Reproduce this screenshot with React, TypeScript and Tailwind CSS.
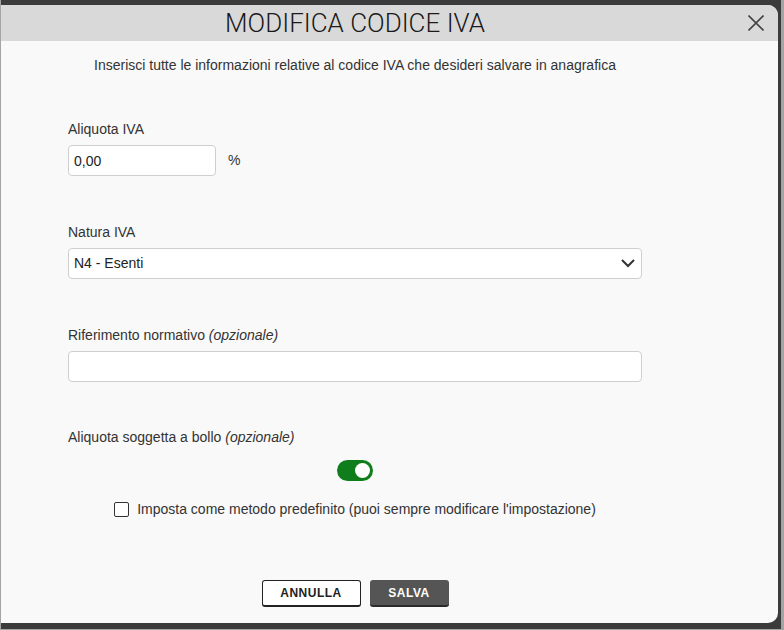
import { useState } from 'react';

const sans = { fontFamily: '"Liberation Sans", Arial, sans-serif' };

export default function App() {
  const [bollo, setBollo] = useState(true);
  const [predefinito, setPredefinito] = useState(false);

  return (
    <div className="w-[784px] h-[630px] bg-[#a4a4a4] flex overflow-hidden" style={sans}>
      <div className="ml-px w-[780px] h-[629px] bg-[#3b3b3b] pt-[5px]">
        <div className="w-[777px] h-[618px] bg-[#f9f9f9] rounded-tr-[10px] rounded-br-[10px] overflow-hidden flex flex-col">
          {/* header */}
          <div className="relative h-[36px] shrink-0 bg-[#d9d9d9] flex items-center">
            <h1
              className="ml-[67px] w-[574px] text-center text-[26px] font-light text-[#1a1a1a] leading-none"
              style={{ fontFamily: 'Roboto, sans-serif' }}
            >
              MODIFICA CODICE IVA
            </h1>
            <button type="button" className="absolute right-[14px] top-[10px] size-[16px] text-[#444]">
              <svg viewBox="0 0 16 16" className="size-[16px]" fill="none" stroke="currentColor" strokeWidth="1.6">
                <path d="M0.5 0.5 L15.5 15.5 M15.5 0.5 L0.5 15.5" />
              </svg>
            </button>
          </div>

          {/* body */}
          <div className="ml-[67px] w-[574px] flex flex-col text-[14px] text-[#333]">
            <p className="mt-[15px] leading-[18px] text-center">
              Inserisci tutte le informazioni relative al codice IVA che desideri salvare in anagrafica
            </p>

            <label className="mt-[46px] leading-[18px]">Aliquota IVA</label>
            <div className="mt-[7px] flex items-center">
              <input
                defaultValue="0,00"
                className="w-[148px] h-[31px] rounded-[4px] border border-[#cfcfcf] bg-white px-[5px] text-[14px] text-[#222] outline-none"
              />
              <span className="ml-[12px]">%</span>
            </div>

            <label className="mt-[47px] leading-[18px]">Natura IVA</label>
            <div className="mt-[7px] h-[31px] rounded-[4px] border border-[#cfcfcf] bg-white flex items-center justify-between pl-[5px] pr-[6px] text-[#222]">
              <span>N4 - Esenti</span>
              <svg viewBox="0 0 14 9" className="w-[14px] h-[9px]" fill="none" stroke="#333" strokeWidth="2">
                <path d="M1 1 L7 7 L13 1" />
              </svg>
            </div>

            <label className="mt-[47px] leading-[18px]">
              Riferimento normativo <i>(opzionale)</i>
            </label>
            <input className="mt-[7px] h-[31px] rounded-[4px] border border-[#cfcfcf] bg-white px-[5px] outline-none" />

            <label className="mt-[46px] leading-[18px]">
              Aliquota soggetta a bollo <i>(opzionale)</i>
            </label>

            <div className="mt-[14px] flex justify-center">
              <button
                type="button"
                onClick={() => setBollo(!bollo)}
                className={`w-[36px] h-[21px] rounded-full flex items-center px-[3px] ${
                  bollo ? 'bg-[#0f7d1b] justify-end' : 'bg-[#bbb] justify-start'
                }`}
              >
                <span className="size-[15px] rounded-full bg-white" />
              </button>
            </div>

            <div className="mt-[19px] flex justify-center items-center gap-[8px]">
              <button
                type="button"
                onClick={() => setPredefinito(!predefinito)}
                className="size-[15px] rounded-[2px] border-[1.5px] border-[#333] bg-white"
              />
              <span className="leading-[18px]">
                Imposta come metodo predefinito (puoi sempre modificare l'impostazione)
              </span>
            </div>

            <div className="mt-[62px] flex justify-center gap-[9px]">
              <button
                type="button"
                className="w-[99px] h-[27px] rounded-[3px] border border-[#222] border-b-[2px] bg-white text-[12px] font-bold tracking-[0.5px] text-[#222]"
              >
                ANNULLA
              </button>
              <button
                type="button"
                className="w-[79px] h-[27px] rounded-[3px] border-b-[2px] border-[#2a2a2a] bg-[#555] text-[12px] font-bold tracking-[0.5px] text-white"
              >
                SALVA
              </button>
            </div>
          </div>
        </div>
      </div>
    </div>
  );
}
